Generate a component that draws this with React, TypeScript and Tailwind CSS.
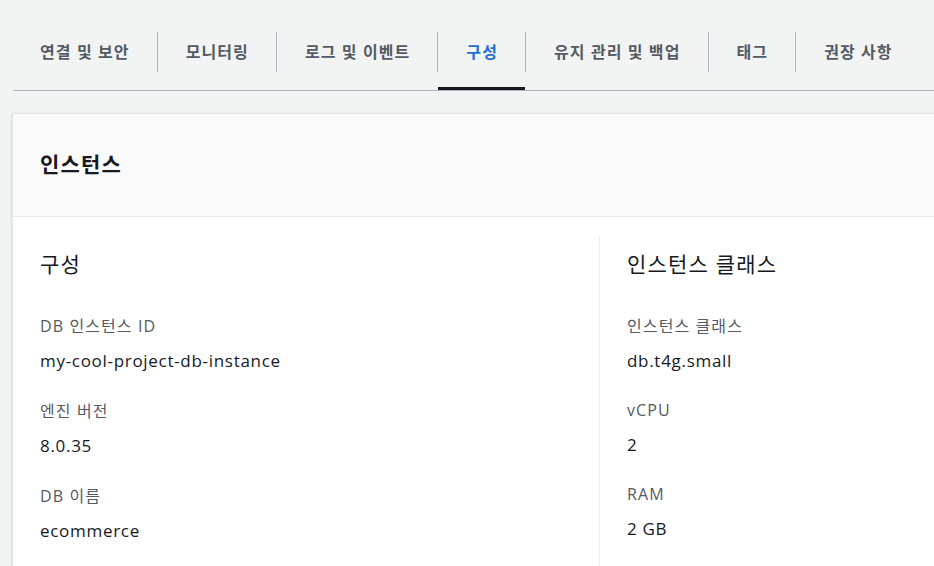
import React from "react";

const tabs = ["연결 및 보안", "모니터링", "로그 및 이벤트", "구성", "유지 관리 및 백업", "태그", "권장 사항"];
const active = "구성";

const font = { fontFamily: '"Open Sans", "Noto Sans CJK KR", sans-serif' };

function Field({ label, value }: { label: string; value: string }) {
  return (
    <div className="flex flex-col">
      <div className="text-[16px] leading-[24px] tracking-[1.1px] text-[#545b64]">{label}</div>
      <div className="mt-[11px] text-[17px] leading-[24px] tracking-[0.7px] text-[#16191f]">{value}</div>
    </div>
  );
}

export default function App() {
  return (
    <div className="w-[934px] h-[566px] overflow-hidden bg-[#f2f3f3]" style={font}>
      <div className="flex h-[91px] ml-[13px] pt-[14px] border-b border-[#aab7b8]">
        {tabs.map((t, i) => (
          <React.Fragment key={t}>
            {i > 0 && <div className="w-px h-[40px] bg-[#aab7b8] self-center shrink-0" />}
            <div
              className={`relative flex items-center whitespace-nowrap text-[16px] tracking-[1.1px] font-bold ${i === 0 ? "pl-[27px]" : "pl-[28px]"} pr-[27px] ${
                t === active ? "text-[#1f6fcc]" : "text-[#545b64]"
              }`}
            >
              {t}
              {t === active && <div className="absolute left-0 right-0 bottom-0 h-[3px] bg-[#16191f]" />}
            </div>
          </React.Fragment>
        ))}
      </div>

      <div className="ml-[12px] mt-[22px] w-[960px] h-[500px] bg-white border-l border-t border-[#e4e7e7] shadow-[0_1px_2px_rgba(0,28,36,0.25)]">
        <div className="bg-[#fafafa] border-b border-[#e4e7e7] pl-[27px] pt-[36px] pb-[38px]">
          <h2 className="text-[21px] leading-[28px] tracking-[1.2px] font-bold text-[#16191f]">인스턴스</h2>
        </div>
        <div className="flex pt-[19px] h-full">
          <div className="w-[586px] pl-[27px] pt-[14px]">
            <h3 className="text-[21px] leading-[28px] tracking-[1.2px] text-[#16191f]">구성</h3>
            <div className="mt-[36px] flex flex-col gap-[26px]">
              <Field label="DB 인스턴스 ID" value="my-cool-project-db-instance" />
              <Field label="엔진 버전" value="8.0.35" />
              <Field label="DB 이름" value="ecommerce" />
            </div>
          </div>
          <div className="flex-1 border-l border-[#eaeded] pl-[27px] pt-[14px]">
            <h3 className="text-[21px] leading-[28px] tracking-[1.2px] text-[#16191f]">인스턴스 클래스</h3>
            <div className="mt-[36px] flex flex-col gap-[25px]">
              <Field label="인스턴스 클래스" value="db.t4g.small" />
              <Field label="vCPU" value="2" />
              <Field label="RAM" value="2 GB" />
            </div>
          </div>
        </div>
      </div>
    </div>
  );
}
